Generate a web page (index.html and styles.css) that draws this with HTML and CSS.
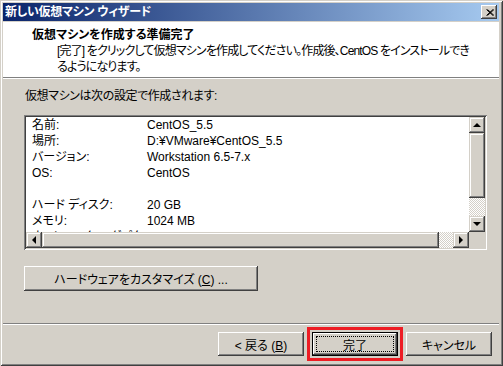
FILE: index.html
```html
<!DOCTYPE html>
<html lang="ja">
<head>
<meta charset="utf-8">
<title>新しい仮想マシン ウィザード</title>
<link rel="stylesheet" href="styles.css">
</head>
<body>
<div class="window">
  <div class="titlebar">
    <span class="title">新しい仮想マシン ウィザード</span>
    <span class="close"><svg width="8" height="7" viewBox="0 0 8 7"><path d="M0.5 0.5 L7 6.5 M1.5 0.5 L8 6.5 M7 0.5 L0.5 6.5 M8 0.5 L1.5 6.5" stroke="#000" stroke-width="1" fill="none"/></svg></span>
  </div>
  <div class="header">
    <div class="h-title">仮想マシンを作成する準備完了</div>
    <div class="h-desc">[完了] をクリックして仮想マシンを作成してください。作成後、CentOS をインストールでき<br>るようになります。</div>
  </div>
  <div class="sep"></div>
  <div class="body">
    <div class="label">仮想マシンは次の設定で作成されます:</div>
    <div class="listbox">
      <div class="viewport">
        <div class="row"><span class="k">名前:</span><span class="v">CentOS_5.5</span></div>
        <div class="row"><span class="k">場所:</span><span class="v">D:¥VMware¥CentOS_5.5</span></div>
        <div class="row"><span class="k">バージョン:</span><span class="v">Workstation 6.5-7.x</span></div>
        <div class="row"><span class="k">OS:</span><span class="v">CentOS</span></div>
        <div class="row"><span class="k">&nbsp;</span><span class="v"></span></div>
        <div class="row"><span class="k">ハード ディスク:</span><span class="v">20 GB</span></div>
        <div class="row"><span class="k">メモリ:</span><span class="v">1024 MB</span></div>
        <div class="row"><span class="k">ネットワーク アダプタ:</span><span class="v">NAT</span></div>
      </div>
      <div class="vscroll">
        <div class="sbtn"><span class="tri up"></span></div>
        <div class="thumb"></div>
        <div class="track"></div>
        <div class="sbtn"><span class="tri down"></span></div>
      </div>
      <div class="hscroll">
        <div class="sbtn"><span class="tri left"></span></div>
        <div class="thumb"></div>
        <div class="track"></div>
        <div class="sbtn"><span class="tri right"></span></div>
      </div>
      <div class="corner"></div>
    </div>
    <button class="btn customize">ハードウェアをカスタマイズ (<u>C</u>) ...</button>
  </div>
  <div class="sep"></div>
  <div class="footer">
    <button class="btn">&lt; 戻る (<u>B</u>)</button>
    <button class="btn default"><span class="focus">完了</span></button>
    <button class="btn">キャンセル</button>
  </div>
</div>
</body>
</html>
```

FILE: styles.css
```css
html, body {
  margin: 0;
  padding: 0;
  background: #d4d0c8;
}
body {
  font-family: "Liberation Sans", "Noto Sans CJK JP", sans-serif;
  font-size: 12px;
  font-feature-settings: "palt";
  color: #000;
}
.window {
  width: 503px;
  height: 366px;
  box-sizing: border-box;
  padding: 3px 4px 4px 3px;
  background: #d4d0c8;
  box-shadow: inset 1px 1px #d4d0c8, inset -1px -1px #404040, inset 2px 2px #fff, inset -2px -2px #808080;
  display: flex;
  flex-direction: column;
}
.titlebar {
  height: 18px;
  flex: none;
  display: flex;
  align-items: center;
  padding-left: 2px;
  background: linear-gradient(90deg, #0a246a, #a6caf0);
  color: #fff;
  font-weight: bold;
  line-height: 18px;
  letter-spacing: -0.3px;
}
.close {
  margin-left: auto;
  margin-right: 2px;
  width: 16px;
  height: 14px;
  background: #d4d0c8;
  box-shadow: inset -1px -1px #404040, inset 1px 1px #fff, inset -2px -2px #808080;
  display: flex;
  align-items: center;
  justify-content: center;
}
.close svg { display: block; margin-left: 1px; }
.header {
  flex: none;
  margin-top: 1px;
  height: 55px;
  box-sizing: border-box;
  padding-top: 5px;
  background: #fff;
  line-height: 16px;
}
.h-title {
  font-weight: bold;
  padding-left: 29px;
}
.h-desc {
  padding-left: 54px;
  white-space: nowrap;
  letter-spacing: -0.85px;
}
.sep {
  flex: none;
  border-top: 1px solid #808080;
  border-bottom: 1px solid #fff;
}
.body {
  flex: 1;
  padding: 9px 0 0 21px;
  display: flex;
  flex-direction: column;
  align-items: flex-start;
}
.label {
  line-height: 16px;
  padding-left: 1px;
  letter-spacing: -0.4px;
}
.listbox {
  margin-top: 11px;
  width: 463px;
  height: 135px;
  box-sizing: border-box;
  padding: 2px;
  background: #fff;
  box-shadow: inset 1px 1px #808080, inset -1px -1px #fff, inset 2px 2px #404040, inset -2px -2px #d4d0c8;
  display: grid;
  grid-template-columns: 1fr 16px;
  grid-template-rows: 1fr 16px;
}
.viewport {
  overflow: hidden;
  padding-left: 6px;
}
.row {
  display: flex;
  line-height: 16px;
  height: 16px;
  white-space: nowrap;
}
.k { width: 115px; flex: none; }
.vscroll {
  display: grid;
  grid-template-rows: 16px 65px 1fr 16px;
}
.hscroll {
  display: grid;
  grid-template-columns: 16px 397px 1fr 16px;
}
.corner { background: #d4d0c8; }
.sbtn, .thumb {
  background: #d4d0c8;
  box-shadow: inset -1px -1px #404040, inset 1px 1px #d4d0c8, inset -2px -2px #808080, inset 2px 2px #fff;
  display: flex;
  align-items: center;
  justify-content: center;
}
.track {
  background: repeating-conic-gradient(#d4d0c8 0 25%, #fff 0 50%) 0 0 / 2px 2px;
}
.tri { width: 0; height: 0; display: block; }
.tri.up { border-left: 4px solid transparent; border-right: 4px solid transparent; border-bottom: 4px solid #000; margin-top: -1px; }
.tri.down { border-left: 4px solid transparent; border-right: 4px solid transparent; border-top: 4px solid #000; }
.tri.left { border-top: 4px solid transparent; border-bottom: 4px solid transparent; border-right: 4px solid #000; margin-left: -1px; }
.tri.right { border-top: 4px solid transparent; border-bottom: 4px solid transparent; border-left: 4px solid #000; }
.btn {
  font: inherit;
  font-size: 12px;
  color: #000;
  background: #d4d0c8;
  border: 0;
  padding: 0;
  margin: 0;
  height: 24px;
  width: 86px;
  box-shadow: inset -1px -1px #404040, inset 1px 1px #fff, inset -2px -2px #808080, inset 2px 2px #d4d0c8;
}
.customize {
  margin-top: 16px;
  width: 234px;
  height: 25px;
}
.footer {
  flex: none;
  height: 37px;
  box-sizing: border-box;
  padding: 7px 7px 0 0;
  display: flex;
  justify-content: flex-end;
  align-items: flex-start;
  gap: 8px;
}
.btn.default {
  position: relative;
  box-shadow: inset 0 0 0 1px #000, inset -2px -2px #404040, inset 2px 2px #fff, inset -3px -3px #808080;
  outline: 3px solid #ed1c24;
  outline-offset: 2px;
}
.focus::after {
  content: "";
  position: absolute;
  left: 4px;
  top: 4px;
  right: 4px;
  bottom: 4px;
  border: 1px dotted #000;
}
```
